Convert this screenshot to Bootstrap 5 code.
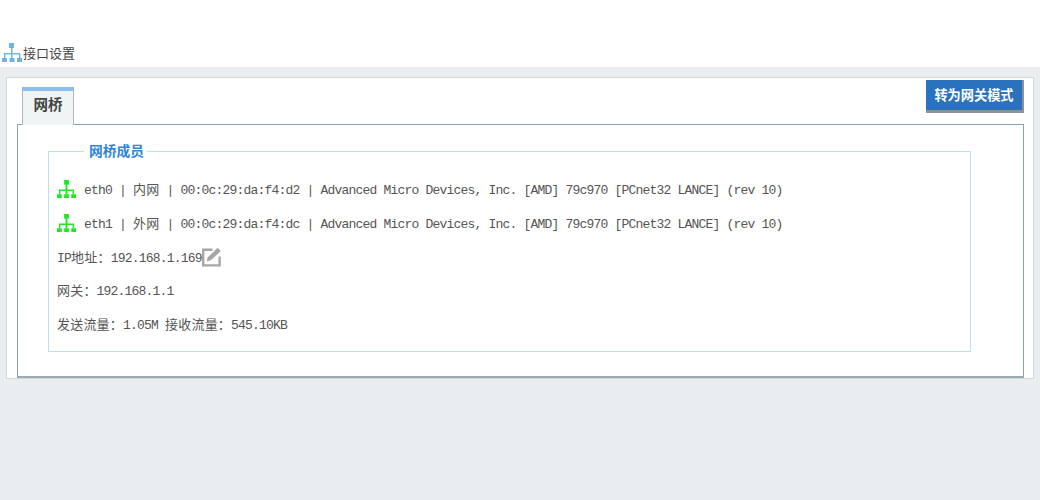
<!DOCTYPE html>
<html lang="zh">
<head>
<meta charset="utf-8">
<title>接口设置</title>
<link href="https://cdn.jsdelivr.net/npm/bootstrap@5.3.0/dist/css/bootstrap.min.css" rel="stylesheet">
<style>
html,body{height:100%}
body{background:#e9edf0;font-family:"Liberation Sans","Noto Sans CJK SC",sans-serif;overflow:hidden}
.top-strip{background:#fff;height:67px;padding-left:2px;color:#444;font-size:13px;line-height:18px}
.top-strip svg{display:block;margin:-3px 1px 0 0}
.wrap-pad{padding:10px 6px 0}
.outer-panel{background:#fff;border:1px solid #d4d6d8;height:302px;padding:9px 9px 0 10px}
.tab-row{height:37px;padding-left:5px}
.tab-item{width:52px;height:38px;background:#f1f4f4;border:1px solid #a9b8c2;border-bottom:0;border-top:4px solid #8cbdec;color:#444;font-size:14.5px;font-weight:700;position:relative;z-index:1;padding-top:4px}
.mode-btn{width:98px;height:33px;margin-top:-7px;margin-right:0;background:#2a72bd;color:#fff;font-size:13.2px;font-weight:700;border:0;border-right:2px solid #8c9499;border-bottom:3px solid #8c9499;border-radius:0;padding:2px 0 0}
.mode-btn:hover{background:#2a72bd;color:#fff}
.content-box{border:1px solid #8aa2b2;border-bottom:2px solid #9aabb5;height:254px;padding:0 52px 0 30px}
.member-set{border:1px solid #bcdff0;margin:18px 0 0;padding:0 8px;height:209px;min-width:0;color:#555;font-family:"Liberation Mono","Noto Sans CJK SC",monospace;font-size:13px;letter-spacing:-.8px}
.member-set legend{float:none;width:auto;margin:0 0 0 27px;padding:1px 3px 0 5px;font-family:"Liberation Sans","Noto Sans CJK SC",sans-serif;font-size:13.75px;font-weight:700;line-height:16px;letter-spacing:0;color:#2f86d6}
.info-line{height:33.75px;white-space:pre}
.info-line:first-of-type{margin-top:14px}
.info-line svg{margin-bottom:3px}
.zh{letter-spacing:.2px}
</style>
</head>
<body>
<div class="top-strip d-flex align-items-end pb-1">
<svg width="20" height="20" viewBox="0 0 20 20"><g fill="#6db3e4"><rect x="7" y="0" width="5" height="5"/><rect x="9" y="5" width="1.5" height="6"/><rect x="2" y="10" width="16" height="1.4"/><rect x="2" y="11" width="1.4" height="4"/><rect x="17" y="11" width="1.4" height="4"/><rect x="9" y="11" width="1.5" height="4"/><rect x="0" y="15" width="5" height="4"/><rect x="7.5" y="15" width="5" height="4"/><rect x="15" y="15" width="5" height="4"/></g></svg>
<span>接口设置</span>
</div>
<div class="wrap-pad">
<div class="outer-panel">
<div class="tab-row d-flex justify-content-between align-items-start">
<div class="tab-item text-center">网桥</div>
<button type="button" class="btn mode-btn">转为网关模式</button>
</div>
<div class="content-box">
<fieldset class="member-set">
<legend>网桥成员</legend>
<div class="info-line d-flex align-items-center"><svg class="me-2" width="19" height="19" viewBox="0 0 20 20"><g fill="#22e622"><rect x="7.5" y="0" width="5" height="5"/><rect x="9" y="5" width="2" height="6"/><rect x="2" y="10" width="16" height="1.6"/><rect x="2" y="11" width="1.6" height="4"/><rect x="16.4" y="11" width="1.6" height="4"/><rect x="9" y="11" width="2" height="4"/><rect x="0" y="15" width="5" height="4"/><rect x="7.5" y="15" width="5" height="4"/><rect x="15" y="15" width="5" height="4"/></g></svg><span>eth0 | <span class="zh">内网</span> | 00:0c:29:da:f4:d2 | Advanced Micro Devices, Inc. [AMD] 79c970 [PCnet32 LANCE] (rev 10)</span></div>
<div class="info-line d-flex align-items-center"><svg class="me-2" width="19" height="19" viewBox="0 0 20 20"><g fill="#22e622"><rect x="7.5" y="0" width="5" height="5"/><rect x="9" y="5" width="2" height="6"/><rect x="2" y="10" width="16" height="1.6"/><rect x="2" y="11" width="1.6" height="4"/><rect x="16.4" y="11" width="1.6" height="4"/><rect x="9" y="11" width="2" height="4"/><rect x="0" y="15" width="5" height="4"/><rect x="7.5" y="15" width="5" height="4"/><rect x="15" y="15" width="5" height="4"/></g></svg><span>eth1 | <span class="zh">外网</span> | 00:0c:29:da:f4:dc | Advanced Micro Devices, Inc. [AMD] 79c970 [PCnet32 LANCE] (rev 10)</span></div>
<div class="info-line d-flex align-items-center"><span>IP<span class="zh">地址：</span>192.168.1.169</span><svg width="20" height="20" viewBox="0 0 20 20"><path d="M10.5 2.8H1.2v15.6h16.4V9.5" fill="none" stroke="#a6a6a6" stroke-width="2.4"/><path d="M4.5 14.5l1.4-4.2L15.6.8l3.2 3.2-9.8 9.2z" fill="#a6a6a6"/></svg></div>
<div class="info-line d-flex align-items-center"><span><span class="zh">网关：</span>192.168.1.1</span></div>
<div class="info-line d-flex align-items-center"><span><span class="zh">发送流量：</span>1.05M <span class="zh">接收流量：</span>545.10KB</span></div>
</fieldset>
</div>
</div>
</div>
<script src="https://cdn.jsdelivr.net/npm/bootstrap@5.3.0/dist/js/bootstrap.bundle.min.js"></script>
</body>
</html>
